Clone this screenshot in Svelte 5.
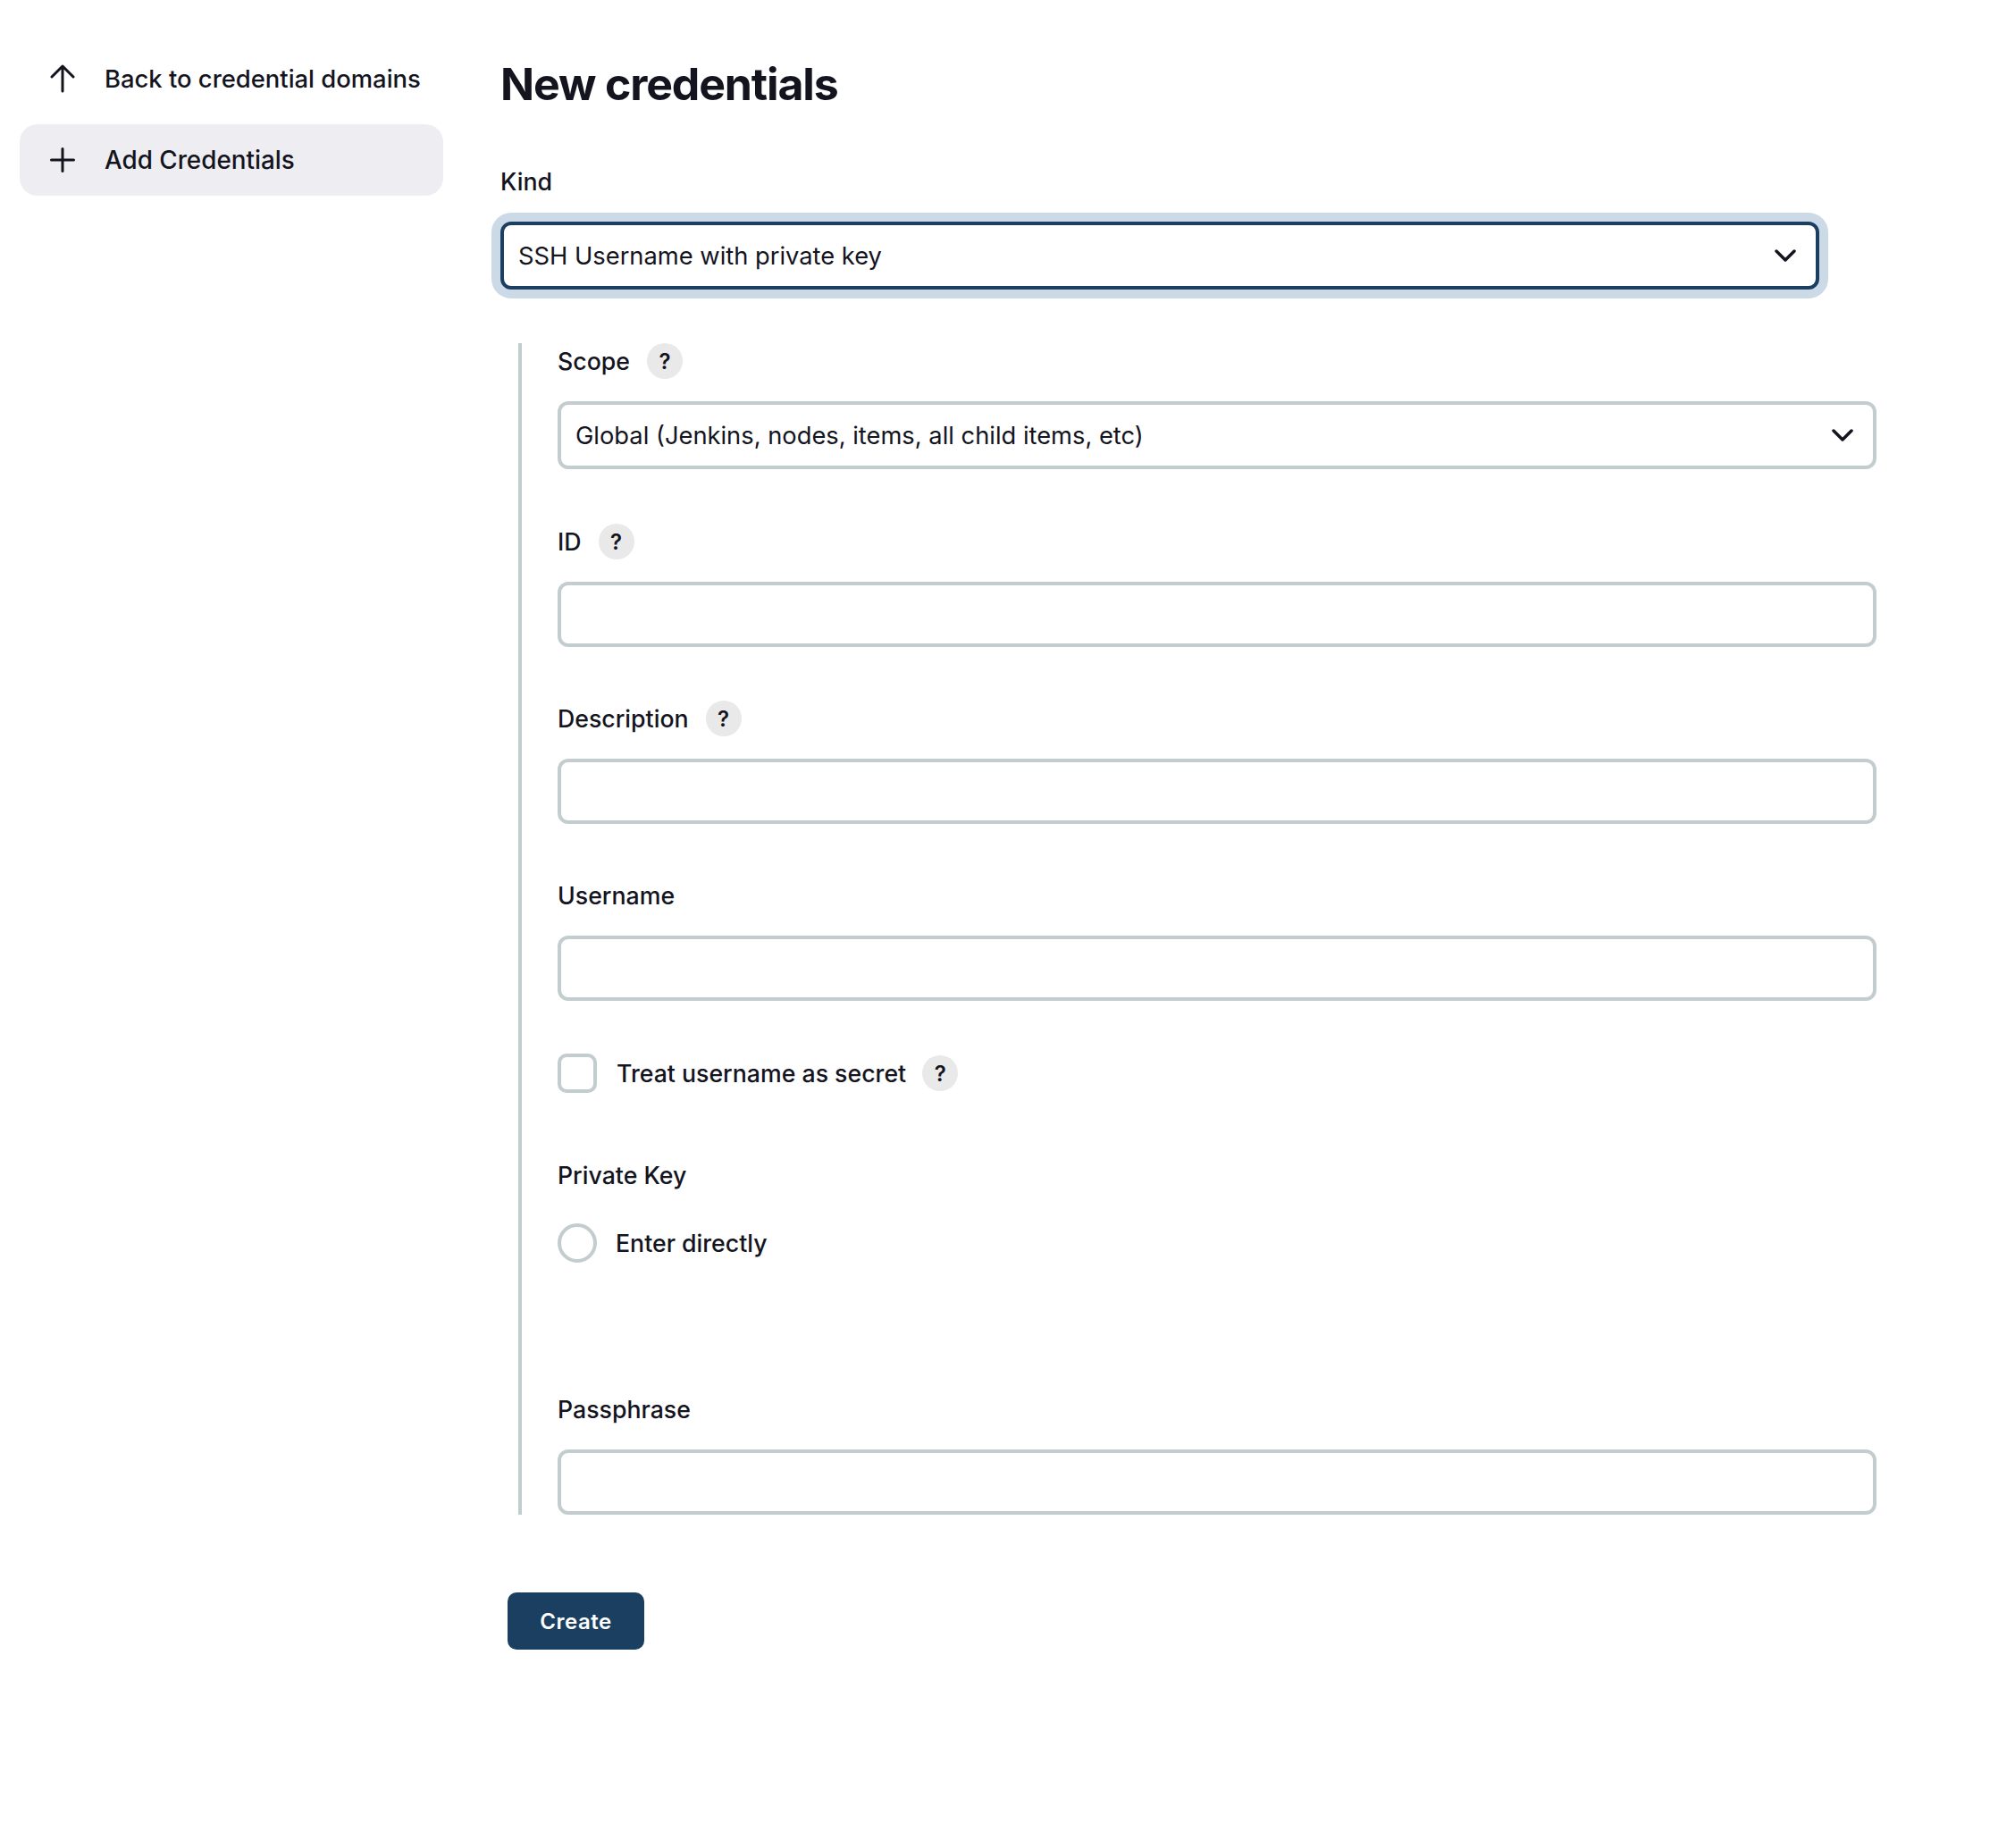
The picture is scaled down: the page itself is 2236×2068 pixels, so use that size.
<script>
  let kind = 'SSH Username with private key';
  let scope = 'Global (Jenkins, nodes, items, all child items, etc)';
</script>

<div class="page">
  <nav class="sidebar">
    <a class="task" href="#back">
      <svg viewBox="0 0 32 32" width="32" height="32"><path d="M16 30V2M4 14 16 2l12 12" /></svg>
      <span>Back to credential domains</span>
    </a>
    <a class="task active" href="#add">
      <svg viewBox="0 0 32 32" width="32" height="32"><path d="M16 3.500v25M3.500 16h25" /></svg>
      <span>Add Credentials</span>
    </a>
  </nav>

  <main>
    <h1>New credentials</h1>

    <form onsubmit={(e) => e.preventDefault()}>
      <div class="label-row"><label for="kind">Kind</label></div>
      <div class="select-wrap">
        <select id="kind" class="focused" bind:value={kind}>
          <option>SSH Username with private key</option>
        </select>
        <svg class="chevron" viewBox="0 0 24 14" width="24" height="14"><path d="M2 2l10 10L22 2" /></svg>
      </div>

      <div class="nested">
        <div class="label-row">
          <label for="scope">Scope</label>
          <span class="help">?</span>
        </div>
        <div class="select-wrap">
          <select id="scope" bind:value={scope}>
            <option>Global (Jenkins, nodes, items, all child items, etc)</option>
          </select>
          <svg class="chevron" viewBox="0 0 24 14" width="24" height="14"><path d="M2 2l10 10L22 2" /></svg>
        </div>

        <div class="label-row spaced">
          <label for="id">ID</label>
          <span class="help">?</span>
        </div>
        <input id="id" type="text" />

        <div class="label-row spaced">
          <label for="description">Description</label>
          <span class="help">?</span>
        </div>
        <input id="description" type="text" />

        <div class="label-row spaced">
          <label for="username">Username</label>
        </div>
        <input id="username" type="text" />

        <div class="check-row">
          <input id="secret" class="box" type="checkbox" />
          <label for="secret">Treat username as secret</label>
          <span class="help">?</span>
        </div>

        <div class="label-row private"><span class="label">Private Key</span></div>
        <div class="radio-row">
          <input id="direct" class="circle" type="radio" name="key" />
          <label for="direct">Enter directly</label>
        </div>

        <div class="label-row pass"><label for="passphrase">Passphrase</label></div>
        <input id="passphrase" type="password" />
      </div>

      <button type="submit">Create</button>
    </form>
  </main>
</div>

<style>
  :global(body) {
    background: #fff;
    color: #14141f;
    font-family: Inter, "Liberation Sans", sans-serif;
  }

  .page {
    display: flex;
    min-height: 2068px;
    box-sizing: border-box;
    padding: 48px 0 0 22px;
  }

  .sidebar {
    width: 474px;
    margin-right: 64px;
    display: flex;
    flex-direction: column;
    gap: 11px;
  }

  .task {
    display: flex;
    align-items: center;
    gap: 31px;
    height: 80px;
    padding-left: 32px;
    border-radius: 20px;
    color: #14141f;
    font-size: 27.4px;
    font-weight: 500;
    text-decoration: none;
  }

  .task svg path {
    fill: none;
    stroke: #14141f;
    stroke-width: 3px;
    stroke-linecap: round;
    stroke-linejoin: round;
  }

  .active {
    background: #eeeef2;
    font-size: 27.8px;
    font-weight: 550;
  }

  main {
    width: 1600px;
  }

  h1 {
    margin: 12px 0 55px;
    font-size: 50px;
    line-height: 68px;
    font-weight: 700;
    letter-spacing: -1.15px;
  }

  .label-row {
    display: flex;
    align-items: center;
    gap: 19px;
    height: 40px;
    margin-bottom: 25px;
  }

  label,
  .label {
    font-size: 26.7px;
    font-weight: 500;
  }

  .spaced {
    margin-top: 61px;
  }

  input + .spaced {
    margin-top: 60px;
  }

  .help {
    width: 40px;
    height: 40px;
    border-radius: 50%;
    background: #e9e9e9;
    display: flex;
    align-items: center;
    justify-content: center;
    font-size: 24px;
    font-weight: 600;
  }

  .select-wrap {
    position: relative;
    width: 1476px;
  }

  select {
    appearance: none;
    display: block;
    width: 100%;
    height: 76px;
    padding: 1px 16px 0;
    box-sizing: border-box;
    border: 4px solid #c3cccf;
    border-radius: 12px;
    background: #fff;
    color: #14141f;
    font-family: inherit;
    font-size: 27.3px;
    outline: none;
  }

  .focused {
    border-color: #1b3f60;
    box-shadow: 0 0 0 10px #ccd9e6;
  }

  .chevron {
    position: absolute;
    right: 26px;
    top: 31px;
    pointer-events: none;
  }

  .chevron path {
    fill: none;
    stroke: #14141f;
    stroke-width: 3.5px;
    stroke-linecap: round;
    stroke-linejoin: round;
  }

  .nested {
    margin: 60px 0 0 20px;
    padding-left: 40px;
    border-left: 4px solid #c3cccf;
    width: 1476px;
  }

  input[type='text'],
  input[type='password'] {
    display: block;
    width: 100%;
    height: 73px;
    box-sizing: border-box;
    border: 4px solid #c3cccf;
    border-radius: 12px;
    background: #fff;
    outline: none;
  }

  .check-row,
  .radio-row {
    display: flex;
    align-items: center;
    height: 44px;
  }

  .check-row {
    margin-top: 59px;
  }

  .box,
  .circle {
    appearance: none;
    width: 44px;
    height: 44px;
    margin: 0;
    box-sizing: border-box;
    border: 4px solid #c3cccf;
    background: #fff;
  }

  .box {
    border-radius: 10px;
    margin-right: 22px;
  }

  .check-row .help {
    margin-left: 18px;
  }

  .circle {
    border-radius: 50%;
    margin-right: 21px;
  }

  .private {
    margin-top: 72px;
    margin-bottom: 34px;
  }

  .pass {
    margin-top: 144px;
  }

  button {
    display: block;
    width: 153px;
    height: 64px;
    margin: 87px 0 0 8px;
    border: none;
    border-radius: 10px;
    background: #1b3f60;
    color: #fff;
    font-family: inherit;
    font-size: 24px;
    font-weight: 600;
    letter-spacing: 0.5px;
  }
</style>
